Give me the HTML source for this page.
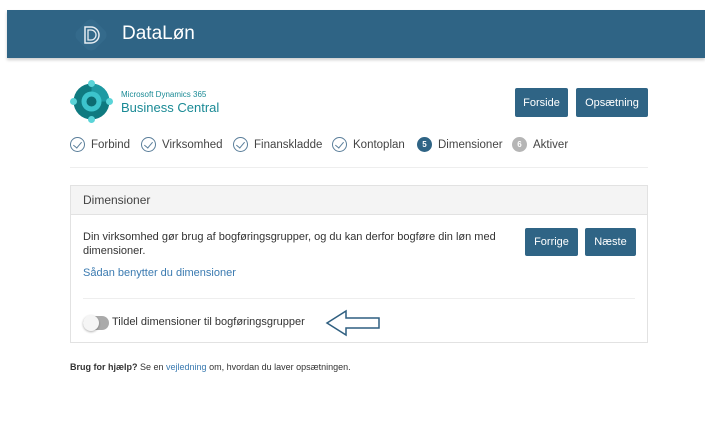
<!DOCTYPE html>
<html><head><meta charset="utf-8"><style>
*{margin:0;padding:0;box-sizing:border-box}
body{width:705px;height:429px;background:#fff;position:relative;font-family:"Liberation Sans",sans-serif;color:#333;overflow:hidden}
.abs{position:absolute}
.hdr{left:7px;top:10px;width:698px;height:48px;background:#2f6485;box-shadow:0 2px 3px rgba(0,0,0,.2)}
.btn{position:absolute;background:#2f6485;color:#fff;font-size:11px;display:flex;align-items:center;justify-content:center;border-radius:2px}
.step{position:absolute;top:137px;font-size:11.5px;color:#444;display:flex;align-items:center;gap:6px;white-space:nowrap}
.ck{width:15px;height:15px;border:1px solid #5a7e9a;border-radius:50%;display:inline-block;position:relative}
.ck:after{content:"";position:absolute;left:4px;top:2px;width:4px;height:7px;border:solid #5a7e9a;border-width:0 1px 1px 0;transform:rotate(40deg)}
.num{width:15px;height:15px;border-radius:50%;color:#fff;font-size:8px;display:inline-flex;align-items:center;justify-content:center;font-weight:bold}
</style></head><body>
<div class="abs hdr"></div>
<svg class="abs" style="left:72px;top:16px" width="38" height="38" viewBox="0 0 38 38">
<rect x="6" y="6" width="26" height="26" rx="7" transform="rotate(45 19 19)" fill="#346a8b"/>
<path d="M13 11h6a8 8 0 0 1 0 16h-6z" fill="none" stroke="#e8eef3" stroke-width="1.5"/>
<path d="M16 14h3a5 5 0 0 1 0 10h-3z" fill="none" stroke="#e8eef3" stroke-width="1.3"/>
</svg>
<div class="abs" style="left:122px;top:23px;font-size:19px;color:#fff">DataLøn</div>
<svg class="abs" style="left:70px;top:80px" width="43" height="43" viewBox="0 0 43 43">
<circle cx="21.5" cy="21.5" r="18" fill="#0f7a80"/>
<path d="M21.5 3.5a18 18 0 0 1 18 18h-18z" fill="#1e9aa3"/>
<circle cx="21.5" cy="21.5" r="10" fill="#3cc4cc"/>
<circle cx="21.5" cy="21.5" r="5" fill="#0c6c72"/>
<circle cx="21.5" cy="3.5" r="3.5" fill="#5ad4d8"/><circle cx="21.5" cy="39.5" r="3.5" fill="#5ad4d8"/>
<circle cx="3.5" cy="21.5" r="3.5" fill="#5ad4d8"/><circle cx="39.5" cy="21.5" r="3.5" fill="#5ad4d8"/>
</svg>
<div class="abs" style="left:121px;top:90px;font-size:8px;color:#1a8a95">Microsoft Dynamics 365</div>
<div class="abs" style="left:121px;top:100px;font-size:13px;color:#1a8a95">Business Central</div>
<div class="btn" style="left:515px;top:88px;width:53px;height:29px">Forside</div>
<div class="btn" style="left:576px;top:88px;width:72px;height:29px">Opsætning</div>
<div class="step" style="left:70px"><span class="ck"></span>Forbind</div>
<div class="step" style="left:141px"><span class="ck"></span>Virksomhed</div>
<div class="step" style="left:233px"><span class="ck"></span>Finanskladde</div>
<div class="step" style="left:332px"><span class="ck"></span>Kontoplan</div>
<div class="step" style="left:417px"><span class="num" style="background:#2f6485">5</span>Dimensioner</div>
<div class="step" style="left:512px"><span class="num" style="background:#b5b5b5">6</span>Aktiver</div>
<div class="abs" style="left:70px;top:167px;width:578px;height:1px;background:#eee"></div>
<div class="abs" style="left:70px;top:185px;width:578px;height:158px;border:1px solid #e2e2e2"></div>
<div class="abs" style="left:71px;top:186px;width:576px;height:29px;background:#f4f4f4;border-bottom:1px solid #e2e2e2"></div>
<div class="abs" style="left:83px;top:193px;font-size:12px;color:#444">Dimensioner</div>
<div class="abs" style="left:83px;top:230px;width:420px;font-size:11px;line-height:14px;color:#333">Din virksomhed gør brug af bogføringsgrupper, og du kan derfor bogføre din løn med dimensioner.</div>
<div class="btn" style="left:525px;top:228px;width:53px;height:28px">Forrige</div>
<div class="btn" style="left:585px;top:228px;width:51px;height:28px">Næste</div>
<div class="abs" style="left:83px;top:267px;font-size:11px;color:#3a7ab0">Sådan benytter du dimensioner</div>
<div class="abs" style="left:83px;top:298px;width:552px;height:1px;background:#eee"></div>
<div class="abs" style="left:83px;top:316px;width:26px;height:14px;border-radius:7px;background:#aaa"></div>
<div class="abs" style="left:83px;top:315px;width:16px;height:16px;border-radius:50%;background:#f5f5f5;box-shadow:0 1px 2px rgba(0,0,0,.3)"></div>
<div class="abs" style="left:112px;top:316px;font-size:11px;color:#333">Tildel dimensioner til bogføringsgrupper</div>
<svg class="abs" style="left:325px;top:309px" width="58" height="28" viewBox="0 0 58 28">
<path d="M2 14L21 2v7h33v10H21v7z" fill="none" stroke="#2f5f80" stroke-width="1.5"/>
</svg>
<div class="abs" style="left:70px;top:362px;font-size:9px;color:#333"><b>Brug for hjælp?</b> Se en <span style="color:#3a7ab0">vejledning</span> om, hvordan du laver opsætningen.</div>
</body></html>
